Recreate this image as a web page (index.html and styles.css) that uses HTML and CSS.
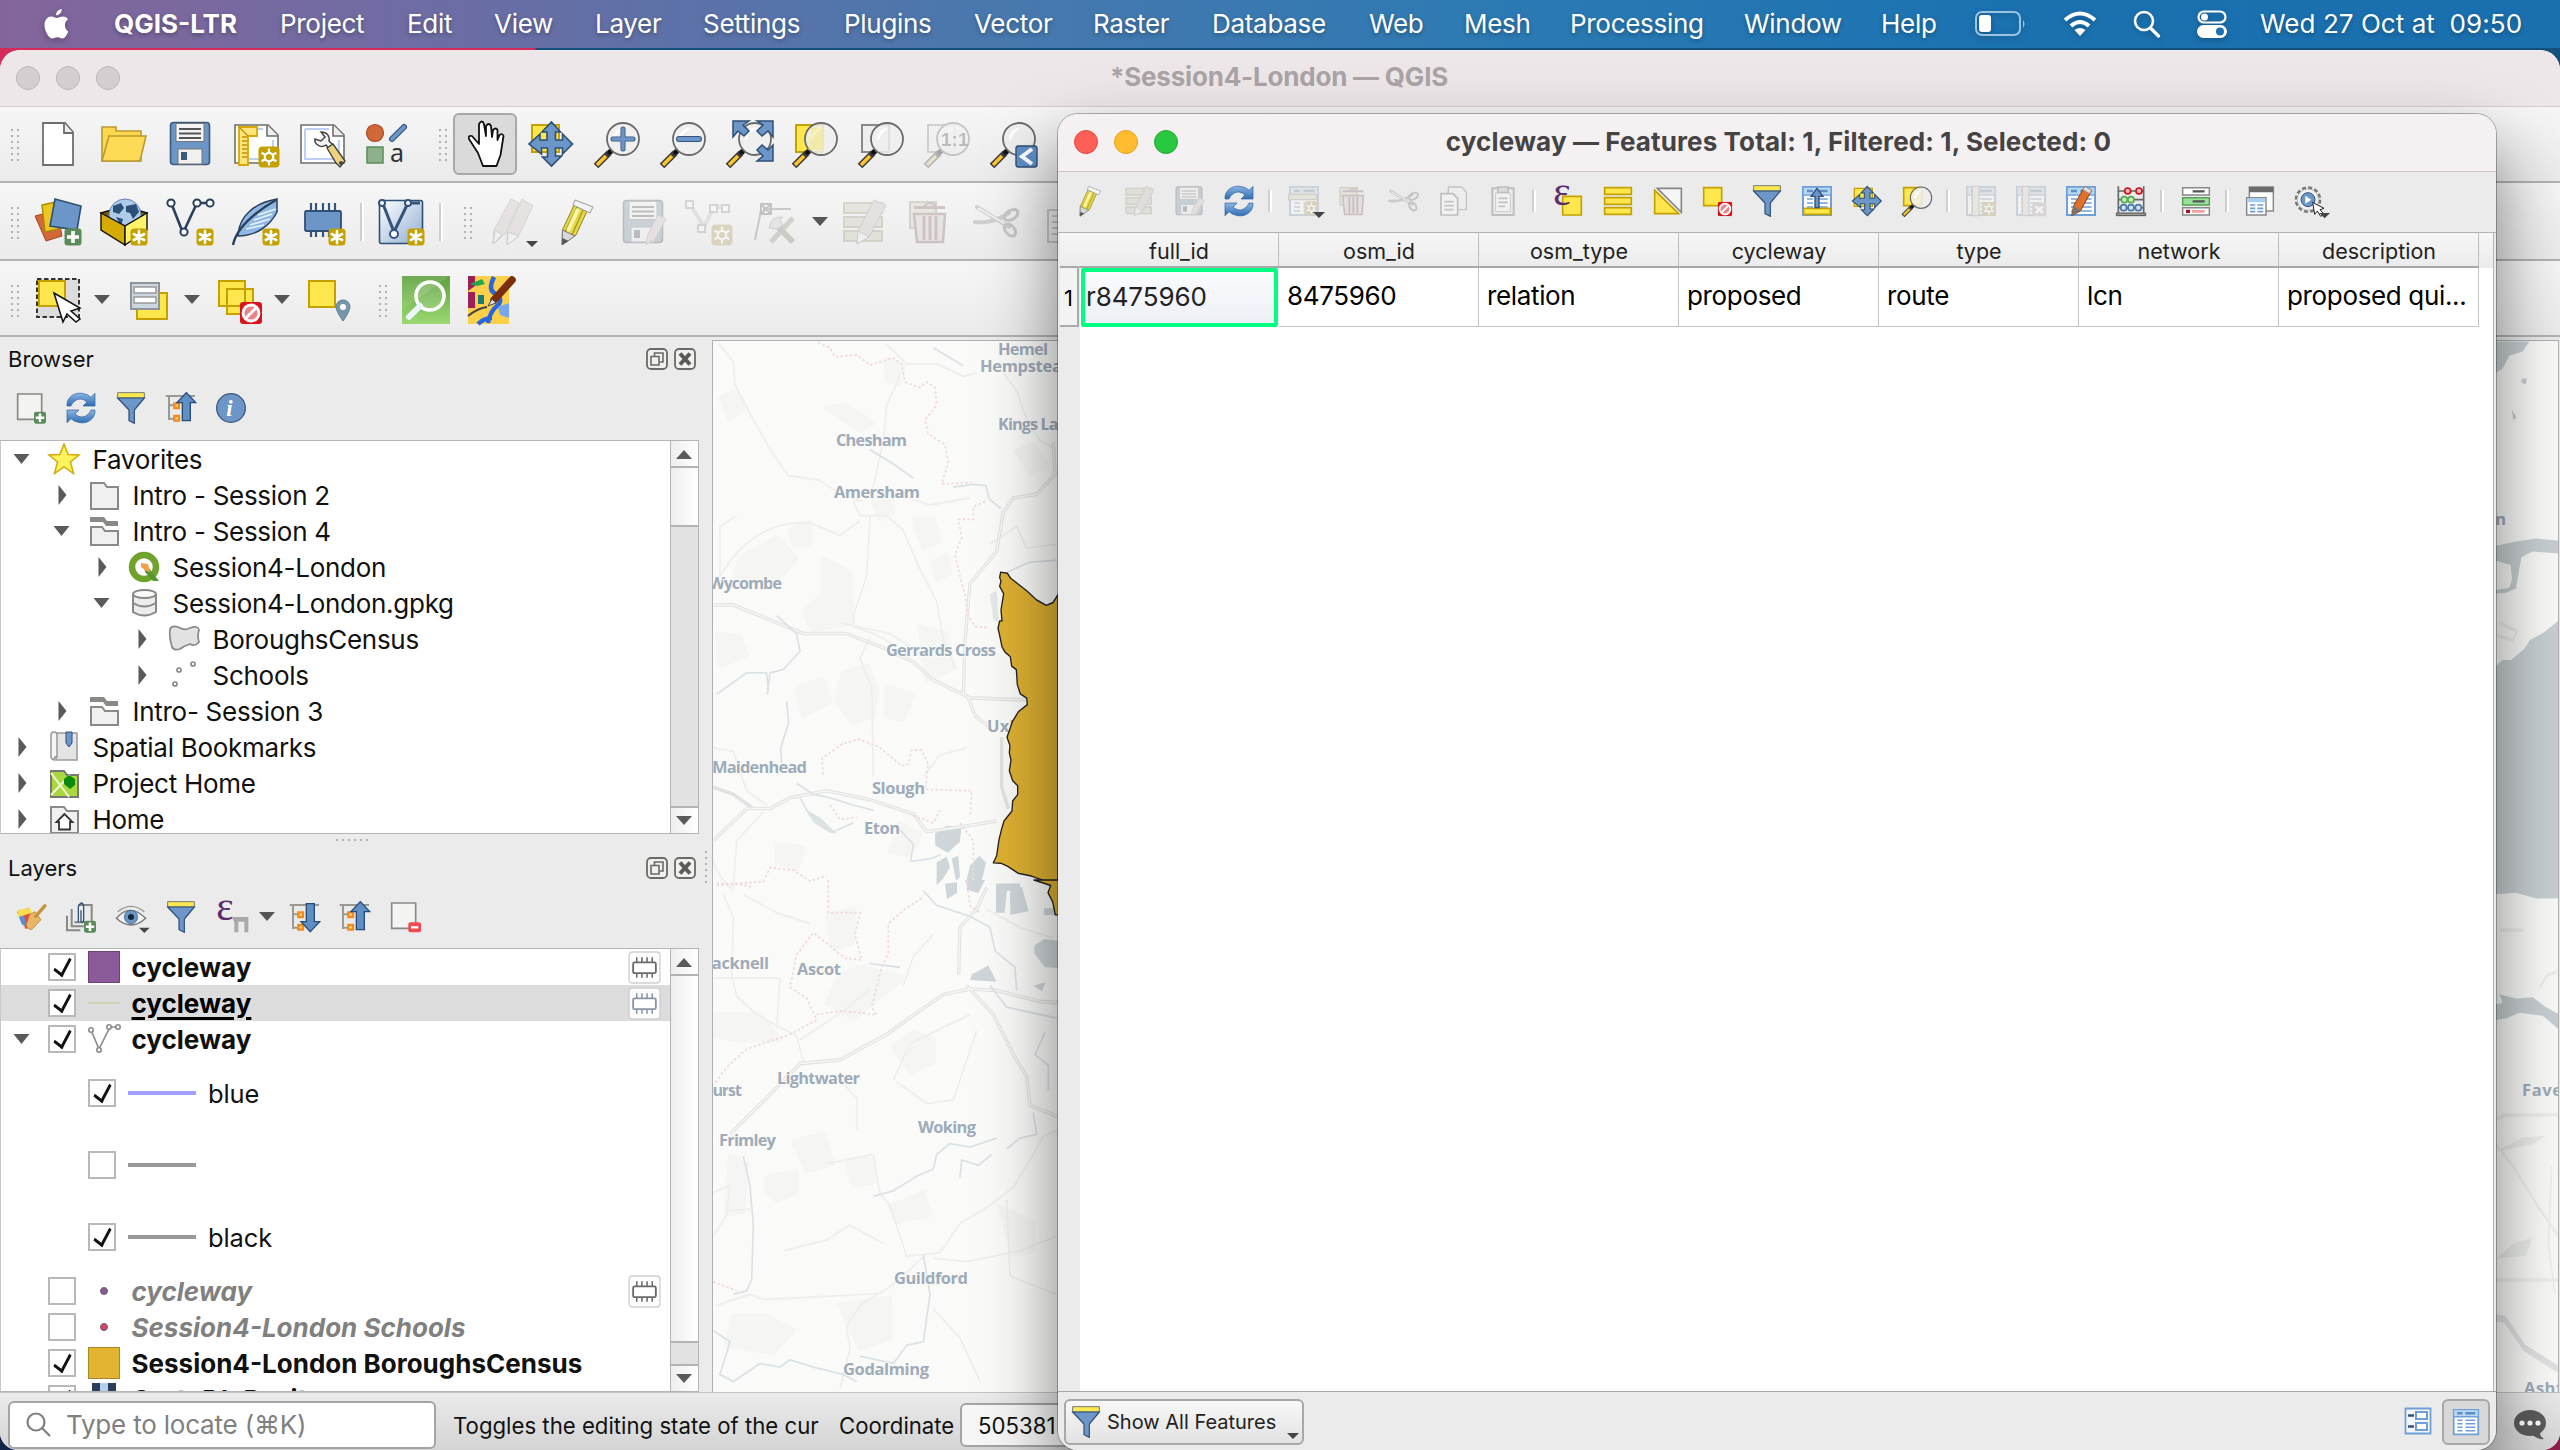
FILE: index.html
```html
<!DOCTYPE html>
<html lang="en">
<head>
<meta charset="utf-8">
<title>Session4-London — QGIS</title>
<link rel="stylesheet" href="styles.css">
</head>
<body>
<svg class="defs" width="0" height="0" aria-hidden="true">
<defs>
  <linearGradient id="g-blue" x1="0" y1="0" x2="1" y2="1"><stop offset="0" stop-color="#fff"/><stop offset="1" stop-color="#8fadd1"/></linearGradient>
  <linearGradient id="g-green" x1="0" y1="0" x2="0" y2="1"><stop offset="0" stop-color="#5ca03c"/><stop offset="1" stop-color="#9bd872"/></linearGradient>
  <linearGradient id="g-refresh" x1="0" y1="0" x2="0" y2="1"><stop offset="0" stop-color="#8cb4e0"/><stop offset="1" stop-color="#2f6eb5"/></linearGradient>
  <symbol id="star" viewBox="0 0 18 18"><rect x=".5" y=".5" width="17" height="17" rx="3.5" fill="#c5a100"/><path d="M9 3v12M3.800 6l10.400 6M14.200 6L3.800 12" stroke="#fff" stroke-width="2.600" stroke-linecap="round"/></symbol>
  <symbol id="cog" viewBox="0 0 22 22"><rect x=".5" y=".5" width="21" height="21" rx="4" fill="#c5a100"/><circle cx="11" cy="11" r="4.200" fill="none" stroke="#fff" stroke-width="2.200"/><path d="M11 2.500v5M11 14.500v5M3.600 6.700l4.300 2.500M14 12.800l4.400 2.500M18.400 6.700l-4.300 2.500M8 12.800l-4.400 2.500" stroke="#fff" stroke-width="2.200"/></symbol>
  <symbol id="plus" viewBox="0 0 18 18"><rect x=".5" y=".5" width="17" height="17" rx="3" fill="#5a8c5a"/><path d="M9 3v12M3 9h12" stroke="#fff" stroke-width="3.600"/></symbol>
  <symbol id="ban" viewBox="0 0 22 22"><rect width="22" height="22" rx="3" fill="#d9141e"/><circle cx="11" cy="11" r="8" fill="#e8848a" stroke="#fff" stroke-width="2.800"/><path d="M5.500 16.500l11-11" stroke="#fff" stroke-width="3"/></symbol>
  <symbol id="glass" viewBox="0 0 48 48"><path d="M3 46L16 33" stroke="#3a3a3a" stroke-width="6.500"/><path d="M4 45L13 36" stroke="#fcc52c" stroke-width="3.600"/><circle cx="17" cy="32" r="2.800" fill="#111"/><circle cx="30" cy="19" r="16" fill="#eee" fill-opacity=".85" stroke="#6b6b6b" stroke-width="1.800"/><path d="M20 20a11 11 0 0 1 9-12q3 0 1 1.500q-6 3-8 10z" fill="#fff"/></symbol>
  <symbol id="pencil" viewBox="0 0 48 48"><path d="M21 7L34 13 L23 37 L9 46 L9.500 32z" fill="#e6d64a" stroke="#8f8417" stroke-width="1"/><path d="M24 9L12 34M30 12L19 37" stroke="#a99a20" stroke-width="1.400"/><path d="M25 11L15 33" stroke="#fbf6a8" stroke-width="4"/><path d="M9.500 32L22 38 9 47z" fill="#d8d8d8" stroke="#777" stroke-width="1"/><path d="M9 47l.5-7 6 3z" fill="#555"/><path d="M22 2L40 9 37 15 20 7z" fill="#f4f4f4" stroke="#999"/></symbol>
  <symbol id="funnel" viewBox="0 0 48 48"><path d="M4 1h40v8H4z" fill="#fce94f" stroke="#777" stroke-width="1.500"/><path d="M4 9h40L29 27v20l-8-4V27z" fill="#6d97c8" stroke="#2f4f74" stroke-width="1.800"/></symbol>
  <symbol id="refresh" viewBox="0 0 48 48"><path d="M3 21C2 8 14 0 26 2q8 1 13 6l6-6v19H27l6-6q-8-7-16-3-6 3-8 9z" fill="url(#g-refresh)" stroke="#2b5f9e"/><path d="M45 27C46 40 34 48 22 46q-8-1-13-6l-6 6V27h18l-6 6q8 7 16 3 6-3 8-9z" fill="url(#g-refresh)" stroke="#2b5f9e"/></symbol>
  <symbol id="move" viewBox="0 0 48 48"><path d="M5 5h27v27H5z" fill="#fde74c" stroke="#c5a100" stroke-width="2"/><path d="M24.500 2l9 10h-5v8h7v-6l10 10-10 10v-6h-7v8h6L24.500 46l-9-9h5v-9h-6v6L2 24l11-10v6h7v-8h-5z" fill="#6b96c7" stroke="#2f4f74" stroke-width="1.600"/></symbol>
  <symbol id="floppy" viewBox="0 0 48 48"><rect x="4.500" y="2.500" width="39" height="42" rx="3" fill="#6b96c7" stroke="#3c5a80" stroke-width="1.600"/><rect x="10" y="3.500" width="28" height="18" fill="#f4f4f4" stroke="#777"/><path d="M13 9h22M13 13.500h22M13 18h22" stroke="#555" stroke-width="1.800"/><rect x="12" y="29" width="24" height="15" fill="#f0f0ee" stroke="#777"/><rect x="15" y="32" width="6" height="8" fill="#3c5a80"/></symbol>
  <symbol id="multiedit" viewBox="0 0 48 48"><g fill="#cfc892" stroke="#a39c5c" stroke-width="2"><path d="M3 5h38v10H3zM3 19h38v10H3zM3 33h38v10H3z"/></g><path d="M33 2l12 5-17 32-12 7 1-13z" fill="#d8bcb8" stroke="#888"/><path d="M17 33l11 6-12 7z" fill="#eee" stroke="#888"/></symbol>
  <symbol id="trash" viewBox="0 0 48 48"><path d="M3 4h26v26H3z" fill="#d8d2a0" stroke="#a39c5c" stroke-width="2"/><path d="M7 16h31l-2 28H10z" fill="#e8c8c8" stroke="#b06068" stroke-width="2.500"/><path d="M7 9.500h31M17 18v24M23 18v24M29 18v24" stroke="#b06068" stroke-width="3"/><path d="M17 8q6-6 12 0" fill="none" stroke="#b06068" stroke-width="2"/></symbol>
  <symbol id="cut" viewBox="0 0 48 48"><path d="M4 9L36 29M2 24q18 2 34-9" stroke="#8d8d8d" stroke-width="4" fill="none" stroke-linecap="round"/><path d="M5 10L34 27" stroke="#fff" stroke-width="1.500"/><ellipse cx="38" cy="17" rx="7.500" ry="4.500" transform="rotate(-30 38 17)" fill="none" stroke="#8c7070" stroke-width="3"/><ellipse cx="37" cy="32" rx="7" ry="4.500" transform="rotate(50 37 32)" fill="none" stroke="#8c7070" stroke-width="3"/></symbol>
  <symbol id="folder" viewBox="0 0 32 32"><path d="M3 4h13l3 4h11v22H3z" fill="#f0f0f0" stroke="#888a85" stroke-width="2"/></symbol>
  <symbol id="folder-open" viewBox="0 0 32 32"><path d="M2 2h14l3 4h11v5H18l-3-4H2z" fill="#888a85"/><path d="M3 12h11l3 4h13v14H3z" fill="#f0f0f0" stroke="#888a85" stroke-width="2"/></symbol>
  <symbol id="chip" viewBox="0 0 32 32"><rect x="1" y="1" width="30" height="30" rx="3" fill="#fcfcfc" stroke="#cfcfcf" stroke-width="1.300"/><path d="M8.500 6v20M13.500 6v20M18.500 6v20M23.500 6v20" stroke="currentColor" stroke-width="1.500"/><rect x="5" y="11" width="22" height="10.500" rx="1.500" fill="#fff" stroke="currentColor" stroke-width="1.800"/></symbol>
  <symbol id="tree-up" viewBox="0 0 48 48"><path d="M1 6h44M6 6v36M6 20h10M6 40h10" stroke="#9a9a92" stroke-width="3" fill="none"/><path d="M14 17h7v7h-7zM14 36h7v7h-7z" fill="#ffe08a" stroke="#f58a1c" stroke-width="3.500"/><path d="M32 1L46 16h-8v27H26V16h-8z" fill="#5f8fc4" stroke="#274b78" stroke-width="2"/></symbol>
  <symbol id="tree-down" viewBox="0 0 48 48"><path d="M1 6h44M6 6v36M6 20h10M6 40h10" stroke="#9a9a92" stroke-width="3" fill="none"/><path d="M14 17h7v7h-7zM14 36h7v7h-7z" fill="#ffe08a" stroke="#f58a1c" stroke-width="3.500"/><path d="M32 46L46 31h-8V4H26v27h-8z" fill="#5f8fc4" stroke="#274b78" stroke-width="2"/></symbol>
  <symbol id="table" viewBox="0 0 48 48"><path d="M3 3h42v42H3z" fill="#fff" stroke="#6f9fd8" stroke-width="3"/><path d="M4 4h40v10H4z" fill="#b5d8f0"/><path d="M9 9h9M23 9h17" stroke="#5f8fc4" stroke-width="4"/><path d="M3 15h42M9 21h9M23 21h17M9 27h9M23 27h17M9 33h9M23 33h17M9 39h9M23 39h17" stroke="#6f9fd8" stroke-width="2.600"/></symbol>
  <symbol id="float" viewBox="0 0 22 22"><rect x="1" y="1" width="20" height="20" rx="4" fill="#f0f0ee" stroke="#6a6a66" stroke-width="1.800"/><path d="M8.500 8V5h8.500v9h-3" fill="none" stroke="#6a6a66" stroke-width="1.600"/><path d="M5 8.500h8V17H5z" fill="none" stroke="#6a6a66" stroke-width="1.600"/></symbol>
  <symbol id="close" viewBox="0 0 22 22"><rect x="1" y="1" width="20" height="20" rx="4" fill="#f0f0ee" stroke="#6a6a66" stroke-width="1.800"/><path d="M6 5.500l10 11M16 5.500l-10 11" stroke="#5a5a57" stroke-width="4"/></symbol>
</defs>
</svg>

<header class="menubar">
  <svg class="apple" viewBox="0 0 26 32"><path d="M18.200 1c.2 3.300-2.500 6.400-5.600 6.300C12.300 4.200 15.200 1.200 18.200 1zM24.800 23.500c-1.400 3.500-3.500 7-6 7-2 0-2.700-1.200-5-1.200s-3.100 1.200-5 1.200C5.600 30.500 1 23.400 1 17.300 1 11.800 4.300 8.600 7.900 8.600c2.200 0 4 1.400 5.500 1.400 1.300 0 3.400-1.500 6-1.500 1.500 0 3.800.6 5.200 2.700-4.600 2.700-3.900 9.800.2 12.300z"/></svg>
  <nav class="menus">
    <b style="width:125px">QGIS-LTR</b><span style="width:85px">Project</span><span style="width:45px">Edit</span><span style="width:59px">View</span><span style="width:66px">Layer</span><span style="width:99px">Settings</span><span style="width:88px">Plugins</span><span style="width:77px">Vector</span><span style="width:77px">Raster</span><span style="width:115px">Database</span><span style="width:53px">Web</span><span style="width:64px">Mesh</span><span style="width:132px">Processing</span><span style="width:95px">Window</span><span style="width:55px">Help</span>
  </nav>
  <div class="status-items">
    <svg width="52" height="26" viewBox="0 0 52 26"><rect x="1" y="1" width="44" height="23" rx="6" fill="none" stroke="#9cc4e2" stroke-width="2"/><rect x="4" y="4" width="12" height="17" rx="3" fill="#fff"/><path d="M48 9q3 4 0 8z" fill="#9cc4e2"/></svg>
    <svg width="34" height="26" viewBox="0 0 34 26"><g fill="none" stroke="#fff" stroke-width="4"><path d="M2 9q15-13 30 0"/><path d="M8 15q9-8 18 0"/></g><path d="M11.500 19q5.500-4 11 0L17 25z" fill="#fff"/></svg>
    <svg width="28" height="28" viewBox="0 0 28 28"><circle cx="11" cy="11" r="9" fill="none" stroke="#fff" stroke-width="2.600"/><path d="M17.500 18l8 8" stroke="#fff" stroke-width="3.200" stroke-linecap="round"/></svg>
    <svg width="30" height="28" viewBox="0 0 30 28"><rect x="1.500" y="1.500" width="27" height="11" rx="5.500" fill="none" stroke="#fff" stroke-width="2.200"/><circle cx="7.500" cy="7" r="3.500" fill="#fff"/><rect x="0" y="15" width="30" height="13" rx="6.500" fill="#fff"/><circle cx="23" cy="21.500" r="4" fill="#1a70b0"/></svg>
    <span class="clock">Wed 27 Oct at&nbsp; 09:50</span>
  </div>
</header>

<main class="desktop">
<section class="window">
  <div class="titlebar"><div class="lights idle"><i></i><i></i><i></i></div><h1>*Session4-London — QGIS</h1></div>

  <div class="toolbar r1">
    <i class="grip"></i>
    <span class="btn"><svg viewBox="0 0 48 48"><path d="M9 3h22l8 9v33H9z" fill="#fff" stroke="#6e6e6e" stroke-width="1.800"/><path d="M30 3v10h9" fill="#eee" stroke="#6e6e6e" stroke-width="1.800"/></svg></span>
    <span class="btn"><svg viewBox="0 0 48 48"><path d="M2 7h14v4h25v30H2z" fill="#fdd84e" stroke="#b89a30" stroke-width="1.600"/><path d="M9 16h37l-6 25H2z" fill="#fddb55" stroke="#b89a30" stroke-width="1.600"/></svg></span>
    <span class="btn"><svg><use href="#floppy"/></svg></span>
    <span class="btn"><svg viewBox="0 0 48 48"><path d="M3 5h33l10 10v28H3z" fill="#fff" stroke="#6e6e6e" stroke-width="1.600"/><path d="M35 5v11h11" fill="#eee" stroke="#6e6e6e" stroke-width="1.600"/><path d="M17 9h14M41 20v19H17" stroke="#bcd0f7" stroke-width="2" fill="none"/><path d="M7 7h18v9h-9v29H7z" fill="#fde47c" stroke="#d9a800" stroke-width="1.800"/><path d="M7 7l9 9M10 17h5M10 21h5M10 25h5M10 29h5M10 33h5M10 37h5" stroke="#c09000" stroke-width="1.300"/><use href="#cog" x="26" y="26" width="22" height="22"/></svg></span>
    <span class="btn"><svg viewBox="0 0 48 48"><path d="M3 5h33l10 10v28H3z" fill="#fff" stroke="#6e6e6e" stroke-width="1.600"/><path d="M35 5v11h11" fill="#eee" stroke="#6e6e6e" stroke-width="1.600"/><path d="M7 9h24M41 20v19H7V9" stroke="#bcd0f7" stroke-width="2" fill="none"/><path d="M17 22c2 4 7 6 11 3l4 5 4-4-5-5c1-5-2-9-8-9l4 5-4 4-6-2z" fill="#f3f3f3" stroke="#444" stroke-width="1.500"/><path d="M29 28l6-4 12 17-5 6-4-4z" fill="#ecd27e" stroke="#444" stroke-width="1.400"/><circle cx="43" cy="43" r="2" fill="#444"/></svg></span>
    <span class="btn"><svg viewBox="0 0 48 48"><circle cx="11" cy="13" r="8.500" fill="#d2683a" stroke="#a8481c" stroke-width="1.200"/><path d="M28 19L40 7" stroke="#35547c" stroke-width="6" stroke-linecap="round"/><path d="M28 19L40 7" stroke="#6b96c7" stroke-width="3.800" stroke-linecap="round"/><rect x="3" y="27" width="16" height="16" fill="#8fb08d" stroke="#5a8c5a" stroke-width="1.500"/><text x="26" y="42" class="ic-a">a</text></svg></span>
    <i class="grip g2"></i>
    <span class="btn on"><svg viewBox="0 0 48 48"><path d="M17 33L8 19q-1-4 3-3l7 8L18 4q3-5 5 0l2 12 0-10q3-4 5 0l1 11 1-7q3-3 4.500 0v10l2-5q3-2 4 1l-3 19-4 11H22z" fill="#fff" stroke="#111" stroke-width="1.800" stroke-linejoin="round"/></svg></span>
    <span class="btn"><svg><use href="#move"/></svg></span>
    <span class="btn"><svg viewBox="0 0 48 48"><use href="#glass"/><path d="M30 9v20M20 19h20" stroke="#35547c" stroke-width="5" stroke-linecap="round"/><path d="M30 9v20M20 19h20" stroke="#6b96c7" stroke-width="3.400" stroke-linecap="round"/></svg></span>
    <span class="btn"><svg viewBox="0 0 48 48"><use href="#glass"/><path d="M20 19h20" stroke="#35547c" stroke-width="6" stroke-linecap="round"/><path d="M20 19h20" stroke="#6b96c7" stroke-width="4" stroke-linecap="round"/></svg></span>
    <span class="btn"><svg viewBox="0 0 48 48"><use href="#glass"/><g fill="#6b96c7" stroke="#2f4f74" stroke-width="1.500"><path d="M8 1h16l-6 4 6 6-5 5-6-5-5 6z"/><path d="M48 1H32l6 4-6 6 5 5 6-5 5 6z"/><path d="M48 41H32l6-5-6-6 5-5 6 5 5-5z"/></g></svg></span>
    <span class="btn"><svg viewBox="0 0 48 48"><path d="M5 5h27v27H5z" fill="#fde74c" stroke="#c5a100" stroke-width="2"/><use href="#glass"/><path d="M21 8h11v22H17z" fill="#f3e78a" opacity=".55"/></svg></span>
    <span class="btn"><svg viewBox="0 0 48 48"><path d="M5 5h27v27H5z" fill="#eee" stroke="#888a85" stroke-width="2"/><use href="#glass"/></svg></span>
    <span class="btn off"><svg viewBox="0 0 48 48"><path d="M5 5h27v27H5z" fill="#eee" stroke="#888a85" stroke-width="2"/><use href="#glass"/><text x="18" y="26" class="ic-11">1:1</text></svg></span>
    <span class="btn"><svg viewBox="0 0 48 48"><use href="#glass"/><rect x="27" y="26" width="21" height="21" rx="2.500" fill="#5e8fc6" stroke="#2f4f74" stroke-width="1.400"/><path d="M43 29l-10 7.500L43 44" stroke="#fff" stroke-width="4" fill="none"/></svg></span>
  </div>

  <div class="toolbar r2">
    <i class="grip"></i>
    <span class="btn"><svg viewBox="0 0 48 48"><path d="M1 18l22-6 5 26-16 5z" fill="#d2683a" stroke="#a8481c"/><path d="M8 7l18-4 7 26-22 5z" fill="#edc620" stroke="#a88a00" stroke-width="1.400"/><path d="M21 1l26 7-4 24-27-4z" fill="#6b96c7" stroke="#2f4f74" stroke-width="1.600"/><use href="#plus" x="30" y="30" width="18" height="18"/></svg></span>
    <span class="btn"><svg viewBox="0 0 48 48"><path d="M1 15L25 8l22 7-22 14z" fill="#7a6200" stroke="#111" stroke-width="1.400"/><circle cx="25" cy="17" r="16" fill="#aecbea" stroke="#5c85b5"/><path d="M13 8l8-3 3 5-5 6-6-2zM26 8l10-2 3 8-6 7-3-6-4-1zM16 19l7 2-2 7z" fill="#2d5078"/><path d="M1 15l24 13v19L1 32z" fill="#d6ab00" stroke="#111" stroke-width="1.400"/><path d="M47 15L25 28v19l22-15z" fill="#fff36a" stroke="#111" stroke-width="1.400"/><use href="#star" x="30" y="30" width="18" height="18"/></svg></span>
    <span class="btn"><svg viewBox="0 0 48 48"><g fill="#fff" stroke="#2a3f5c" stroke-width="2"><path d="M6 7l11 28L31 5h14" fill="none" stroke-width="2.600"/><circle cx="5" cy="5" r="3.600"/><circle cx="31" cy="5" r="3.600"/><circle cx="44" cy="5" r="3.600"/><circle cx="18" cy="34" r="3.600"/></g><use href="#star" x="30" y="30" width="18" height="18"/></svg></span>
    <span class="btn"><svg viewBox="0 0 48 48"><path d="M6 36C8 18 22 5 45 1v13C38 28 24 38 6 38z" fill="#8fb8e4" stroke="#2a3f5c" stroke-width="1.500"/><path d="M22 22l18-6M18 27l20-6M14 31l18-4M26 17l18-6" stroke="#eaf3fc" stroke-width="1.600"/><path d="M1 47C4 32 20 16 44 2" stroke="#2a3f5c" stroke-width="2.400" fill="none"/><use href="#star" x="30" y="30" width="18" height="18"/></svg></span>
    <span class="btn"><svg viewBox="0 0 48 48"><path d="M13 5v34M18 5v34M25 5v34M31 5v34M37 5v34" stroke="#35547c" stroke-width="2.200"/><rect x="7" y="13" width="36" height="20" rx="1.500" fill="#6b96c7" stroke="#2f4f74" stroke-width="1.800"/><use href="#star" x="30" y="30" width="18" height="18"/></svg></span>
    <i class="vsep"></i>
    <span class="btn"><svg viewBox="0 0 48 48"><rect x="2.500" y="2.500" width="43" height="43" rx="2" fill="url(#g-blue)" stroke="#2f4f74" stroke-width="1.600"/><g fill="#fff" stroke="#35547c" stroke-width="2"><path d="M6 6l11 28L31 5h12" fill="none" stroke-width="3"/><circle cx="5" cy="5" r="3"/><circle cx="31" cy="5" r="3"/><circle cx="17" cy="36" r="4"/></g><use href="#star" x="30" y="30" width="18" height="18"/></svg></span>
    <i class="vsep"></i>
    <i class="grip g3"></i>
    <span class="btn off menu"><svg viewBox="0 0 48 48"><path d="M24 1l8 4-14 31-12 10 1-14z" fill="#dcc0bb" stroke="#999"/><path d="M35 1l11 7-14 29-12 9V35z" fill="#dcc0bb" stroke="#999"/><path d="M8 32l7 5-9 9zM21 34l11 4-12 9z" fill="#f3f3f3" stroke="#888"/></svg></span>
    <span class="btn"><svg><use href="#pencil"/></svg></span>
    <span class="btn off"><svg viewBox="0 0 48 48"><use href="#floppy"/><path d="M39 17l8 4-11 20-9 6 2-11z" fill="#dcc0bb" stroke="#999"/></svg></span>
    <span class="btn off"><svg viewBox="0 0 48 48"><g fill="#fff" stroke="#999" stroke-width="2"><path d="M5 6l14 23L29 9h14" fill="none" stroke-width="4" stroke="#bbc0b8"/><path d="M1 3h7v7H1zM25 7h7v7h-7zM37 7h7v7h-7zM13 27h7v7h-7z"/></g><use href="#cog" x="26" y="26" width="22" height="22"/></svg></span>
    <span class="btn off"><svg viewBox="0 0 48 48"><path d="M10 12L4 42M12 11h28" stroke="#777" stroke-width="2"/><path d="M10 6h10v10H10zM11 7l8 8M19 7l-8 8" fill="none" stroke="#666" stroke-width="2"/><path d="M42 20L20 44" stroke="#9a9570" stroke-width="5"/><path d="M24 26l18 18" stroke="#8a8664" stroke-width="6"/><path d="M18 30q2-12 14-11l-3 3 3 5-6 4z" fill="#ccc" stroke="#888"/></svg></span>
    <i class="arrow a2"></i>
    <span class="btn off"><svg><use href="#multiedit"/></svg></span>
    <span class="btn off"><svg><use href="#trash"/></svg></span>
    <span class="btn off"><svg><use href="#cut"/></svg></span>
    <span class="btn off"><svg viewBox="0 0 48 48"><path d="M9 12h22v32H9z" fill="#eee" stroke="#777" stroke-width="2"/><path d="M13 18h14M13 24h14M13 30h14M13 36h14" stroke="#777" stroke-width="2"/></svg></span>
  </div>

  <div class="toolbar r3">
    <i class="grip"></i>
    <span class="btn"><svg viewBox="0 0 48 48"><path d="M3 3h42v38H3z" fill="#dcdcdc" stroke="#333" stroke-width="2" stroke-dasharray="4.500 2.500"/><path d="M5 5h26v25H5z" fill="#fde74c" stroke="#c5a100" stroke-width="2"/><path d="M20 17l26 15-9 3 9 8-4 3-9-8-4 8z" fill="#fff" stroke="#111" stroke-width="1.500"/></svg></span><i class="arrow"></i>
    <span class="btn"><svg viewBox="0 0 48 48"><path d="M13 17h30v26H13z" fill="#fde74c" stroke="#c5a100" stroke-width="2"/><path d="M7 7h28v26H7z" fill="#ccd6e0" stroke="#8d949b" stroke-width="2"/><path d="M10 11h22v6H10zM10 21h22v6H10z" fill="#fff" stroke="#999" stroke-width="1.500"/></svg></span><i class="arrow"></i>
    <span class="btn"><svg viewBox="0 0 48 48"><path d="M5 5h26v25H5zM13 13h26v25H13z" fill="#fde74c" stroke="#c5a100" stroke-width="2"/><use href="#ban" x="26" y="26" width="22" height="22"/></svg></span><i class="arrow"></i>
    <span class="btn"><svg viewBox="0 0 48 48"><path d="M5 5h26v26H5z" fill="#fde74c" stroke="#c5a100" stroke-width="2"/><path d="M39 45q-7-10-7-14a7 7 0 0 1 14 0q0 4-7 14z" fill="#7797a8" stroke="#5a7f94"/><circle cx="39" cy="31" r="3" fill="#fff"/></svg></span>
    <i class="grip g4"></i>
    <span class="btn"><svg viewBox="0 0 48 48"><path d="M0 0h48v48H0z" fill="url(#g-green)"/><path d="M0 0h48L0 34z" fill="#fff" opacity=".12"/><circle cx="28" cy="20" r="14" fill="#fff" fill-opacity=".15" stroke="#fff" stroke-width="3.600"/><path d="M18 30L7 41" stroke="#eef4fb" stroke-width="6" stroke-linecap="round"/></svg></span>
    <span class="btn"><svg viewBox="0 0 48 48"><path d="M0 0h41v48H0z" fill="#fcd04b"/><path d="M0 0h7v10l-7 5zM0 16h7v16H0z" fill="#9c2058"/><path d="M2 8l12-5 3 5-8 2z" fill="#22a848"/><path d="M26 1q-6 12 0 16 10 6 4 12-8 6-10 18M10 48q6-6 14-6" stroke="#2866e0" stroke-width="4.500" fill="none"/><path d="M10 19h6v9h-6z" fill="#1c7a72"/><path d="M30 31l11-4v15l-9-3z" fill="#7aa6f0"/><path d="M0 40q10-8 19-9" stroke="#444" stroke-width="2" fill="none"/><path d="M26 24L44 4" stroke="#7a2e0c" stroke-width="7.500" stroke-linecap="round"/><path d="M20 30l4-7 4 4z" fill="#ddd" stroke="#444"/></svg></span>
  </div>

  <div class="workspace">
    <aside class="dock">
      <div class="dock-title">Browser<span><svg><use href="#float"/></svg><svg><use href="#close"/></svg></span></div>
      <div class="dock-tools">
        <svg viewBox="0 0 48 48"><path d="M4 3h36v38H4z" fill="#f3f3f1" stroke="#888a85" stroke-width="2.500"/><use href="#plus" x="28" y="29" width="19" height="19"/></svg>
        <svg><use href="#refresh"/></svg>
        <svg><use href="#funnel"/></svg>
        <svg><use href="#tree-up"/></svg>
        <svg viewBox="0 0 48 48"><circle cx="24" cy="24" r="21.500" fill="#6b96c7" stroke="#3c5a80" stroke-width="2"/><text x="17" y="36" class="ic-i">i</text></svg>
      </div>
      <div class="pane browser">
        <ul class="tree">
          <li><i class="tw open"></i><svg><path d="M16 1l4.200 10.500L31 12l-8.500 7 3 11.500L16 24l-9.500 6.500 3-11.500L1 12l10.800-.5z" fill="#fdf35c" stroke="#d4a90a" stroke-width="1.500"/></svg>Favorites</li>
          <li class="l1"><i class="tw"></i><svg><use href="#folder"/></svg>Intro - Session 2</li>
          <li class="l1"><i class="tw open"></i><svg><use href="#folder-open"/></svg>Intro - Session 4</li>
          <li class="l2"><i class="tw"></i><svg><circle cx="16" cy="16" r="12" fill="none" stroke="#6fa32b" stroke-width="6.500"/><path d="M16 15l4 1 11 14h-6l-8-9z" fill="#589632"/><path d="M13 12l7 1 2 8-4-1-5-4z" fill="#f5a04a"/></svg>Session4-London</li>
          <li class="l2"><i class="tw open"></i><svg><path d="M5 7v18q11 7 23 0V7" fill="#ececec" stroke="#888a85" stroke-width="2"/><ellipse cx="16.500" cy="7" rx="11.500" ry="4" fill="#fafafa" stroke="#888a85" stroke-width="2"/><path d="M5 16q11 7 23 0" fill="none" stroke="#888a85" stroke-width="2"/></svg>Session4-London.gpkg</li>
          <li class="l3"><i class="tw"></i><svg><path d="M2 6q2-4 8-2 6 4 12 1 8-3 9 2-2 6 0 12-4 5-9 2-6 2-10 5-6 2-8-2-3-10-2-18z" fill="#e2e2e2" stroke="#888a85" stroke-width="1.700"/></svg>BoroughsCensus</li>
          <li class="l3"><i class="tw"></i><svg><g fill="#fff" stroke="#888a85" stroke-width="1.700"><circle cx="25" cy="5" r="2"/><circle cx="11" cy="11" r="2"/><circle cx="7" cy="25" r="2"/></g></svg>Schools</li>
          <li class="l1"><i class="tw"></i><svg><use href="#folder-open"/></svg>Intro- Session 3</li>
          <li><i class="tw"></i><svg><path d="M8 2h21v27H8z" fill="#e4e4e6" stroke="#999" stroke-width="1.500"/><path d="M3 4q0-3 3-3t3 3v22q-3-1-3 3-3-1-3-3z" fill="#f6f6f6" stroke="#999" stroke-width="1.500"/><path d="M18 1h6v11l-3 4-3-4z" fill="#6b96c7" stroke="#2f4f74"/></svg>Spatial Bookmarks</li>
          <li><i class="tw"></i><svg><path d="M3 4h13l3 4h11v22H3z" fill="#a9d93e" stroke="#777" stroke-width="2"/><path d="M3 6l18 24M3 28L22 8" stroke="#f3f8d8" stroke-width="2"/><path d="M21 8l6 4v6l-5 4-6-5v-5z" fill="#0c8a0c"/></svg>Project Home</li>
          <li><i class="tw"></i><svg><path d="M3 4h13l3 4h11v22H3z" fill="#f0f0f0" stroke="#888a85" stroke-width="2"/><path d="M16.500 11l-8 8h2.500v7.500h11V19h2.500z" fill="#fff" stroke="#333" stroke-width="1.800"/></svg>Home</li>
        </ul>
        <div class="scroll"><i class="up"></i><i class="thumb"></i><i class="track"></i><i class="down"></i></div>
      </div>
      <div class="hsplit"><i></i></div>
      <div class="dock-title second">Layers<span><svg><use href="#float"/></svg><svg><use href="#close"/></svg></span></div>
      <div class="dock-tools second">
        <svg viewBox="0 0 48 48"><path d="M3 16l18-6 7 28-12 4z" fill="#e8483a"/><path d="M3 16l9-3 5 26-7-4z" fill="#5f8fd0"/><path d="M3 14l20-4 2 8-20 6z" fill="#f6dd52"/><path d="M22 20l8-4 9 12-14 15q-8-1-8-8z" fill="#e8b765" stroke="#a87728"/><path d="M31 23L45 7" stroke="#c8913c" stroke-width="5" stroke-linecap="round"/></svg>
        <svg viewBox="0 0 48 48"><path d="M20 6h20v26H14M10 12v26h20M3 22v22h20" fill="none" stroke="#888a85" stroke-width="3"/><path d="M20 32V8q6-10 8 0v22q-4 4-4 0V14" fill="none" stroke="#35547c" stroke-width="2"/><use href="#plus" x="28" y="29" width="19" height="19"/></svg>
        <svg viewBox="0 0 48 48"><path d="M2 26q20-24 44 0-22 20-44 0z" fill="#f3f3f3" stroke="#777" stroke-width="2"/><path d="M4 16q20-16 40 0" fill="none" stroke="#999" stroke-width="2"/><circle cx="24" cy="24" r="10" fill="#6b96c7" stroke="#35547c"/><circle cx="24" cy="24" r="4.500" fill="#16263c"/><path d="M36 40h16l-8 8z" fill="#444"/></svg>
        <svg><use href="#funnel"/></svg>
        <svg viewBox="0 0 48 48"><text x="2" y="29" class="ic-e big">ε</text><path d="M25 24h25v23h-6V31h-9v16h-6V32z" fill="#a9a9a7"/></svg>
        <i class="arrow a3"></i>
        <svg><use href="#tree-down"/></svg>
        <svg><use href="#tree-up"/></svg>
        <svg viewBox="0 0 48 48"><path d="M4 3h36v38H4z" fill="#f3f3f1" stroke="#888a85" stroke-width="2.500"/><rect x="29" y="32" width="19" height="15" rx="3" fill="#f04a4e"/><path d="M33 39.500h11" stroke="#fff" stroke-width="3.500"/></svg>
      </div>
      <div class="pane layers">
        <ul class="tree bold">
          <li><i class="tw none"></i><i class="cb ck"></i><i class="sw" style="background:#8b5a9a;border-color:#6b4378"></i>cycleway<svg class="mem"><use href="#chip"/></svg></li>
          <li class="sel"><i class="tw none"></i><i class="cb ck"></i><i class="sw line"></i><u>cycleway</u><svg class="mem dim"><use href="#chip"/></svg></li>
          <li><i class="tw open"></i><i class="cb ck"></i><svg class="sym"><g fill="#fff" stroke="#888a85" stroke-width="1.600"><path d="M3 7l8 19L22 4h8" fill="none"/><circle cx="3" cy="7" r="2.200"/><circle cx="11" cy="27" r="2.200"/><circle cx="21" cy="4" r="2.200"/><circle cx="30" cy="4" r="2.200"/></g></svg>cycleway</li>
          <li class="cls"><i class="cb ck"></i><i class="ln" style="background:#a0a0ff"></i>blue</li>
          <li class="cls"><i class="cb"></i><i class="ln"></i></li>
          <li class="cls"><i class="cb ck"></i><i class="ln"></i>black</li>
          <li class="hid"><i class="tw none"></i><i class="cb"></i><i class="dot" style="background:#8b5a9a"></i>cycleway<svg class="mem"><use href="#chip"/></svg></li>
          <li class="hid"><i class="tw none"></i><i class="cb"></i><i class="dot" style="background:#d8406a"></i>Session4-London Schools</li>
          <li><i class="tw none"></i><i class="cb ck"></i><i class="sw" style="background:#e3b332;border-color:#a8862a"></i>Session4-London BoroughsCensus</li>
          <li><i class="tw none"></i><i class="cb ck"></i><svg class="sym"><path d="M4 0h24v26H4z" fill="#2b3d5a"/><path d="M12 0h8v10h-8z" fill="#b5cfee"/></svg>CartoDb Positron</li>
        </ul>
        <div class="scroll"><i class="up"></i><i class="thumb long"></i><i class="track"></i><i class="down"></i></div>
      </div>
    </aside>
    <div class="vsplit"><i></i></div>
    <div class="map">
      <svg viewBox="713 341 1845 1051">
        <path d="M713 341h1845v1051H713z" fill="#fafaf8"/>
        <g transform="translate(700 330) scale(.33333 .35714)">
          <g class="wood"><path d="M370 640l80 40 10 140-120 20-30-50 60-50zM270 560l60-20 0 60-50 0zM430 960l70-20 30 60-10 80-60 20-50-60zM640 530l60 0 20 60-50 20zM520 480l50-30 10 60-40 20zM120 640l110-60 60 60-60 60-130 10zM660 830l80 20 20 100-80 30zM290 1000l80-20 20 60-80 40zM560 1000l80 20-30 70-50-10zM50 850l70 10 20 50-80 30zM380 220l60-10 80 50-40 20zM560 80l50 20-10 50-40-10zM60 190l50-20 20 50-40 30zM600 1380l60 30-30 60-60-10zM950 340l50-20 40 60-50 20zM700 650l40-20 10 50-40 20zM230 1440l80 10-20 60-60-20z"/></g>
          <g fill="#cfd6d9"><path d="M705 1410l35-22 44 4-4 40-36 32-38-20zM800 1540l10-40 28-28 20 20-10 40-18 36h-30zM890 1550h70v20h-70zM710 1490l30-15 10 30-20 30-20 20zM755 1480l20-8 5 60-12 10z"/><path d="M320 1345l40 20 50 45-20-2-50-30z" opacity=".7"/><path d="M870 740l20-10 6 90-16-10z" opacity=".5"/></g>
          <g class="road"><path d="M55 38l45 50 5 65 50 90 55 90 55 75 90 12 70 40 60 20M460 480l20 40h80l50 40 50 110 50 90 20 110 40 80M510 520l-10 170-40 110 0 30 60 20 60 30M560 40l60 55 90 0 80 35 40-10M910 120l40 50 30 80 40 60 40 20M40 1170l60 10 40 110 60 40M60 690q100-160 270-150l90 35 60-40M110 520l-50 30 0 140M510 860l-30 60 35 80 5 250M590 460l100 30 120-20M600 130l-40 80-10 100-30 130M800 1170l-80 20-50 60M870 600l80-50 30 60 90-10M40 1440q-20 60 60 130M190 1350l-80 80-10 130M420 820l150 30 100 60"/></g>
          <g class="road big"><path d="M40 770h60l120 45 90 35h130l110 40 90 40 60 50 110 50 130 5h100M790 1020l5-150 15-160 80-90 20-110 30-40 70-10 55-55-5-90M805 1030l20 50 40 30M40 1430l100-90 70 0 60-30 110-20 130 25 130 40 40 50 110-15 100-15"/><path d="M40 1280l60 20 60 40M905 1140l0 140 20 60"/></g>
          <g class="road core"><path d="M40 770h60l120 45 90 35h130l110 40 90 40 60 50 110 50 130 5h100M790 1020l5-150 15-160 80-90 20-110 30-40 70-10 55-55-5-90M805 1030l20 50 40 30M40 1430l100-90 70 0 60-30 110-20 130 25 130 40 40 50 110-15 100-15"/></g>
          <g class="water"><path d="M510 335l70 40 60 40M700 50l90 50M760 440l60-8 38 4 10 38 35 26M230 800l60 50 10 50-50 50-40 10-8 60M205 1010l-5-50-60 0-90 60M260 1040l6 60-24 70 4 50M290 1270l50 30 50 10 70 20 60 15M300 1310l30 50 70 45 60-25M600 1400l40 40-8 48 60-8 30 -10M900 690l40-20 50-20 80-5"/></g>
          <g class="bound"><path d="M355 35l35 15 15 25 65-5 40 28 70-20 25 18 10 50 45 15 20-15 25 15 5 50-35 40 10 40 50 30 10 50-20 60 90-4M855 480l-35 15 0 35-45 0 10 50-20 50 15 60 15 50 10 60 20 30 40 4M370 1245l-5-45 60-40 50-14 60 20 70 54 20-4 10-40 30 0 20 40-10 70 140 4-4 70M50 1550l60 0 80-5 20-40 70 8 50 30 50-15M390 1330l30 40 50-5M640 1360l60 20 20-35M780 1380l40 50 0 130"/></g>
        </g>
        <g transform="translate(700 880) scale(.33333 .36350)">
          <g class="wood"><path d="M40 370l140 0 60 70-110 0-90-10zM380 100l80-20 0 90-60 20zM420 260l70-20 120 30-150 110-80-40zM580 460l60-40 60 20 0 60-70 30zM200 820l90-20 0 60-60 20-30-20zM440 770h80v60l-60 10zM570 900l100-40 20 60-100 20zM100 1200l100 0 80 40-60 60-140-20zM420 1170l150-20 0 110-90 30zM90 760l50 20-10 130-50 10zM280 720l90-20 30 80-80 20zM900 900l100 40 0 80-60 10z"/></g>
          <g fill="#cfd6d9"><path d="M888 12l34 4-8 74h-26zM930 14l36 6 20 66-55 10zM735 10l36-4 0 30-30 16zM795 0h60l-20 36-24-6zM1003 180l30-18 42 5v75l-40-2-32-38zM1032 78h40v18h-40zM815 260l50-25 25 45-80-5zM1000 290l36-8-10 24z"/></g>
          <g class="road"><path d="M70 40l30 60-5 160 15 60 60 50 120 60 20 70M130 40l100 50 100 30M300 440l130-80 80-60M40 270h200l-10 140M580 550l50-100 180-80M590 555l90 60 80-10 70-190M40 860l50-20-10 80-40 60M80 910l70-5M380 780l140-25 20 110 30 30 50 140 100-10 60-80 90-50 70-50 60-90 30-50 50-20M50 1170l100-30 40 14 350-16 60-40 80-70M420 1400l30-110-10-60 40-60 70-40M920 880l10 210 140 50M550 1000l-100-50-70 40-130 30M700 1040l100 10 160-30 110-40M410 540l60 60 0 90M700 150l-60 60-30 80M860 80l100 50 100 30M700 1180l80 80 60 120"/></g>
          <g class="road big"><path d="M860 20l-30 60-50 50-4 130M90 700l120-110 90-85 120-10 140-70 90-60 80-50 80-15 80 4 130 30 100 6M800 290l80 80 60 110 40 60 10 80 80 30"/></g>
          <g class="road core"><path d="M860 20l-30 60-50 50-4 130M90 700l120-110 90-85 120-10 140-70 90-60 80-50 80-15 80 4 130 30 100 6M800 290l80 80 60 110 40 60 10 80 80 30"/></g>
          <g class="water"><path d="M670 30l40 40 100 30 60 30 15 65 60 45 5 65M870 290l50 60 100 20 50 10M510 230l90 10M1035 420l-30 60 40 30 0 70M520 870l60-15 70-40 50-20 10-40 40-30 60 10 80-25M780 820l5-50 50 15 40-30M1000 640l10 60-50 10-40 30M130 760l20 80 10 110-5 150-15 30-40 10M40 1240l50 30-30 90 40 20 80-50 60 10 30-20 70 20 90 20 40 20M480 1310l100 20 40-50 50-10 20-130-20-110"/></g>
          <g class="bound"><path d="M50 15l60-5 50 10M385 0l0 90 95 0-15 60 20 70-50-5-95-70-50 60-20 90 50 30 30 60-80 40-130 40-60 50-40 50M350 370l70-10 110 10-15-20 30-110 20-40 0-80 50-40 50-30M40 1105l70 25M800 0l10 70 30 20"/></g>
        </g>
        <g transform="translate(2480 330) scale(.33333 .71429)">
          <path fill="#c8cfd2" d="M48 16h100l-20 14-40 6-20 18-20 6zM48 302l60-6 60-4 70 3v18l-80-3-34 8-8 22-8 22-30 6-30 1v-5l40-3 8-12-4-20-44-6zM48 470l20-8 26 0 40-16 16-12 40-10 48-18v390l-70 0-60-8-60 2zM48 944l20-2-10-12 50 6 50-2 40 14 40 10v22l-50-20-70-4-40 8-30 2zM95 112l15 10-10 4zM125 68l16 0-4 8-12-2z"/>
          <path fill="#eceeeb" d="M48 1300l50-20 60-10-20 26zM48 1150l80-20 70-2-40 12z"/>
          <g class="road"><path d="M48 1105l30-6 160 0M48 1140l50 30 80 60 60 40M60 410l50 12-10 12-50-6M180 920l20-16 30-6M60 840l70 0M215 1170l-10 110 20 70M48 1330h190"/></g>
          <g class="road big"><path d="M48 1383l26 2 60 40 100 30"/></g>
        </g>
        <g class="labels">
          <text x="998" y="355" textLength="50">Hemel</text><text x="980" y="372" textLength="92">Hempstead</text><text x="998" y="430" textLength="100">Kings Langley</text><text x="836" y="446" textLength="71">Chesham</text><text x="834" y="498" textLength="86">Amersham</text><text x="709" y="589" textLength="73">Wycombe</text><text x="886" y="656" textLength="110">Gerrards Cross</text><text x="987" y="732" textLength="76">Uxbridge</text><text x="712" y="773" textLength="95">Maidenhead</text><text x="872" y="794" textLength="53">Slough</text><text x="864" y="834" textLength="36">Eton</text><text x="694" y="969" textLength="75">Bracknell</text><text x="797" y="975" textLength="44">Ascot</text><text x="777" y="1084" textLength="83">Lightwater</text><text x="668" y="1096" textLength="74">Sandhurst</text><text x="719" y="1146" textLength="57">Frimley</text><text x="918" y="1133" textLength="58">Woking</text><text x="894" y="1284" textLength="74">Guildford</text><text x="843" y="1375" textLength="86">Godalming</text><text x="2436" y="525" textLength="70">Basildon</text><text x="2522" y="1096" textLength="96">Faversham</text><text x="2524" y="1394" textLength="68">Ashford</text>
        </g>
        <path class="city" transform="translate(700 330) scale(.33333 .35714)" d="M902 678l20 3 10 14 48 35 30 26 29 15 20-8 15-22 0 820-20-12-60-20-40-8-32-20-20-8-22-1 10-20 7-45 8-30 7-22 24-28 2-28 15-18 0-25-15-14-10-28 5-30-5-20 2-20-9-24 17-45 17-26 27-20-2-18-19-12-9-26-3-42-14-10-4-26-16-13-9-15-7-32-5-20 5-20 7-1-3-30 8-46-12-20 4-15-4-10z"/>
        <path class="city" transform="translate(700 880) scale(.33333 .36350)" d="M1002 0l50 15-8 20 14 25 8 36 12 0 0-96z"/>
      </svg>
    </div>
  </div>

  <footer class="statusbar">
    <div class="locator"><svg viewBox="0 0 28 28"><circle cx="11" cy="11" r="8.500"/><path d="M17.500 17.500l7.500 7.500"/></svg><span>Type to locate (⌘K)</span></div>
    <span class="msg">Toggles the editing state of the cur</span>
    <span class="coord">Coordinate</span>
    <div class="coordbox"><span>505381</span></div>
    <svg class="bubble" viewBox="0 0 34 32"><ellipse cx="17" cy="14" rx="16" ry="13" fill="#5c5c5c"/><path d="M18 25q7 6 13 5-5-3-4-8z" fill="#5c5c5c"/><g fill="#fff"><circle cx="9" cy="14" r="2.600"/><circle cx="17" cy="14" r="2.600"/><circle cx="25" cy="14" r="2.600"/></g></svg>
  </footer>
</section>

<section class="dialog">
  <div class="dlg-title"><div class="lights"><i></i><i></i><i></i></div><h2>cycleway — Features Total: 1, Filtered: 1, Selected: 0</h2></div>
  <div class="dlg-tools">
    <span><svg><use href="#pencil"/></svg></span>
    <span class="off"><svg><use href="#multiedit"/></svg></span>
    <span class="off"><svg viewBox="0 0 48 48"><use href="#floppy"/><path d="M39 19l8 4-11 18-9 6 2-11z" fill="#dcc0bb" stroke="#999"/></svg></span>
    <span><svg><use href="#refresh"/></svg></span>
    <i class="vsep"></i>
    <span class="off menu"><svg viewBox="0 0 48 48"><use href="#table"/><path d="M1 14h42v8H1z" fill="#d8d2a0" stroke="#a39c5c" stroke-width="2"/><use href="#cog" x="24" y="24" width="22" height="22"/></svg></span>
    <span class="off"><svg><use href="#trash"/></svg></span>
    <span class="off"><svg><use href="#cut"/></svg></span>
    <span class="off"><svg viewBox="0 0 48 48"><path d="M17 3h20l7 8v26H17z" fill="#f3f3f3" stroke="#777" stroke-width="2"/><path d="M6 13h18l7 7v25H6z" fill="#fff" stroke="#666" stroke-width="2.500"/><path d="M11 25h14M11 31h14M11 37h14" stroke="#777" stroke-width="2.500"/></svg></span>
    <span class="off"><svg viewBox="0 0 48 48"><path d="M8 5h32v40H8z" fill="#eee" stroke="#666" stroke-width="3"/><path d="M13 12h22v28H13z" fill="#fff" stroke="#888" stroke-width="1.500"/><path d="M16 3h16v8H16z" fill="#bbb" stroke="#666" stroke-width="2"/><path d="M17 20h14M17 26h14M17 32h10" stroke="#777" stroke-width="2.500"/></svg></span>
    <i class="vsep"></i>
    <span><svg viewBox="0 0 48 48"><path d="M16 17h28v28H16z" fill="#fde74c" stroke="#c5a100" stroke-width="2.500"/><text x="2" y="30" class="ic-e big">ε</text></svg></span>
    <span><svg viewBox="0 0 48 48"><path d="M4 4h40v10H4zM4 19h40v10H4zM4 34h40v10H4z" fill="#fde74c" stroke="#c5a100" stroke-width="2.500"/></svg></span>
    <span><svg viewBox="0 0 48 48"><path d="M8 5h36v36z" fill="#f6f6f6" stroke="#888" stroke-width="2.500"/><path d="M4 8v35h36z" fill="#fde74c" stroke="#c5a100" stroke-width="2.500"/></svg></span>
    <span><svg viewBox="0 0 48 48"><path d="M4 4h27v27H4z" fill="#fde74c" stroke="#c5a100" stroke-width="2.500"/><use href="#ban" x="25" y="25" width="22" height="22"/></svg></span>
    <span><svg><use href="#funnel"/></svg></span>
    <span><svg viewBox="0 0 48 48"><use href="#table"/><path d="M4 35h40v9H4z" fill="#fde74c" stroke="#c5a100" stroke-width="2.500"/><path d="M24 5l9 12h-6v17h-6V17h-6z" fill="#6b96c7" stroke="#2f4f74" stroke-width="2"/></svg></span>
    <span><svg><use href="#move"/></svg></span>
    <span><svg viewBox="0 0 48 48"><path d="M4 4h27v27H4z" fill="#fde74c" stroke="#c5a100" stroke-width="2.500"/><use href="#glass"/></svg></span>
    <i class="vsep"></i>
    <span class="off"><svg viewBox="0 0 48 48"><use href="#table"/><path d="M11 2h10v44H11z" fill="#e0ddc0" stroke="#999" stroke-width="2"/><use href="#cog" x="25" y="25" width="22" height="22"/></svg></span>
    <span class="off"><svg viewBox="0 0 48 48"><use href="#table"/><path d="M11 2h10v44H11z" fill="#e8d4d4" stroke="#999" stroke-width="2"/><rect x="26" y="27" width="21" height="20" rx="3" fill="#c8a0a0"/><path d="M31 32l11 10M42 32L31 42" stroke="#fff" stroke-width="4"/></svg></span>
    <span><svg viewBox="0 0 48 48"><use href="#table"/><path d="M30 2l10 6-17 31-13 7 3-15z" fill="#e0702c" stroke="#8a3c0c" stroke-width="1.500"/><path d="M13 31l10 7-13 8z" fill="#777"/><path d="M30 2l10 6-3 5-10-6z" fill="#ddd" stroke="#888"/></svg></span>
    <span><svg viewBox="0 0 48 48"><path d="M5 2v42M43 2v42M5 9h38M5 22h38M5 34h38" stroke="#666" stroke-width="2.500"/><path d="M2 42h44v4H2z" fill="#9a9a92" stroke="#555" stroke-width="1.500"/><g stroke-width="2.500"><g fill="#f6b4b4" stroke="#c8141e"><circle cx="19" cy="9" r="4.500"/><circle cx="36" cy="9" r="4.500"/></g><g fill="#c4f0b8" stroke="#58a858"><circle cx="14" cy="22" r="4.500"/><circle cx="24" cy="22" r="4.500"/></g><g fill="#cfe2f6" stroke="#4a78a8"><circle cx="13" cy="34" r="4.500"/><circle cx="24" cy="34" r="4.500"/><circle cx="35" cy="34" r="4.500"/></g></g></svg></span>
    <i class="vsep"></i>
    <span><svg viewBox="0 0 48 48"><g stroke="#888" stroke-width="2.200" fill="#fff"><path d="M4 4h40v11H4z"/><path d="M4 19h40v11H4z" fill="#9be09b" stroke="#58a058"/><path d="M4 34h40v11H4z"/></g><path d="M19 9.500h18M19 24.500h18" stroke="#555" stroke-width="3.500"/><path d="M9 39.500h6" stroke="#b0101c" stroke-width="5"/><path d="M18 39.500h19" stroke="#f6a0a4" stroke-width="4"/></svg></span>
    <i class="vsep"></i>
    <span><svg viewBox="0 0 48 48"><path d="M8 3h36v36H8z" fill="#fff" stroke="#888" stroke-width="2.200"/><path d="M8 3h36v8H8z" fill="#6b6b6b"/><path d="M4 19h29v26H4z" fill="#fff" stroke="#888" stroke-width="2.200"/><path d="M5 20h27v6H5z" fill="#a9cff0"/><path d="M9 30h8M20 30h9M9 35h8M20 35h9M9 40h8M20 40h9" stroke="#6f9fd8" stroke-width="2.500"/></svg></span>
    <span><svg viewBox="0 0 48 48"><circle cx="21" cy="22" r="18" fill="#f0f0f0" stroke="#777" stroke-width="4" stroke-dasharray="6 3.400"/><circle cx="21" cy="22" r="16" fill="#f3f3f3" stroke="#999"/><circle cx="21" cy="22" r="10.500" fill="#6b96c7" stroke="#35547c" stroke-width="1.500"/><path d="M17 16l9 6-9 6z" fill="#fff"/><path d="M28 26l17 9-6 2 6 7-5 3-5-8-4 5z" fill="#fff" stroke="#222" stroke-width="1.500"/><path d="M38 42h16l-8 8z" fill="#444"/></svg></span>
  </div>
  <div class="table">
    <div class="thead"><span></span><span>full_id</span><span>osm_id</span><span>osm_type</span><span>cycleway</span><span>type</span><span>network</span><span>description</span></div>
    <div class="trow"><span class="rn">1</span><span class="cur">r8475960</span><span>8475960</span><span>relation</span><span>proposed</span><span>route</span><span>lcn</span><span>proposed qui...</span></div>
  </div>
  <div class="dlg-foot">
    <div class="filter"><svg><use href="#funnel"/></svg>Show All Features</div>
    <div class="views">
      <svg viewBox="0 0 28 28"><path d="M1.500 1.500h25v25h-25z" fill="#f4f6f8" stroke="#6f9fd8" stroke-width="1.800"/><path d="M4 8.500h6M4 19.500h6" stroke="#35547c" stroke-width="2.600"/><path d="M12 5h11v7H12zM12 16h11v7H12z" fill="#fff" stroke="#6f9fd8" stroke-width="2"/></svg>
      <span class="pressed"><svg><use href="#table"/></svg></span>
    </div>
  </div>
</section>
</main>
</body>
</html>
```
FILE: styles.css
```css
* { box-sizing: border-box; }
html, body { margin: 0; width: 2560px; height: 1450px; overflow: hidden; }
body {
  font-family: Inter, "Liberation Sans", sans-serif;
  font-size: 26px;
  color: #111;
  display: flex;
  flex-direction: column;
}
svg { display: block; overflow: visible; flex: none; }
.defs { width: 0; height: 0; overflow: hidden; }
ul { list-style: none; margin: 0; padding: 0; }
h1, h2 { margin: 0; font-size: 26px; font-weight: 700; white-space: nowrap; }
i { font-style: normal; flex: none; }

/* menu bar */
.menubar {
  height: 48px; flex: none;
  display: flex; align-items: center;
  padding: 0 38px 1px 43px;
  color: #fff;
  background: linear-gradient(90deg, #83659b 0, #6f6ca3 400px, #4878ae 1000px, #2c7ab3 1500px, #1b72b1 2000px, #1a6fae);
}
.menubar svg { filter: drop-shadow(0 2px 3px rgba(0,0,0,.25)); }
.apple { width: 27px; height: 32px; fill: #fff; margin-right: 44px; }
.menus { display: flex; gap: 42px; text-shadow: 0 2px 4px rgba(0,0,0,.3); letter-spacing: -.3px; }
.menus > * { white-space: nowrap; flex: none; }
.menus span { position: relative; left: -1px; }
.menus b { font-weight: 700; letter-spacing: 0; }
.status-items { margin-left: auto; display: flex; align-items: center; gap: 36px; }
.clock { width: 262px; margin-left: -3px; white-space: nowrap; letter-spacing: .05px; text-shadow: 0 2px 4px rgba(0,0,0,.3); }

/* main window */
.desktop { flex: 1; position: relative; isolation: isolate; padding-top: 2px; background: linear-gradient(90deg, #d42a5c 0 535px, #14507c 536px); }
.desktop::after { content: ""; position: absolute; left: 0; right: 0; bottom: 0; height: 30px; background: linear-gradient(90deg, #14254a 50%, #8f1d4a 50%); z-index: -1; }
.window {
  height: 1400px; border-radius: 20px 20px 18px 18px; overflow: hidden;
  display: flex; flex-direction: column; background: #ebebeb;
}
.titlebar { height: 57px; flex: none; position: relative; display: flex; align-items: center; justify-content: center; background: #eee7e9; border-bottom: 1px solid #d3cfd0; color: #aaa4a6; }
.titlebar h1 { padding: 0 2px 3px 0; letter-spacing: -.2px; }
.lights { position: absolute; left: 16px; display: flex; gap: 16px; }
.lights i { width: 24px; height: 24px; border-radius: 50%; background: #ff5f57; border: 1px solid #e2463f; }
.lights i:nth-child(2) { background: #febc2e; border-color: #e0a028; }
.lights i:nth-child(3) { background: #28c840; border-color: #24a834; }
.lights.idle i { background: #d4ced0; border-color: #bdb8ba; }

.toolbar { display: flex; align-items: center; flex: none; border-bottom: 2px solid #b2b2b2; background: linear-gradient(#f6f6f6, #ebebeb); padding-left: 9px; overflow: hidden; }
.r1 { height: 76px; }
.r2 { height: 78px; padding-top: 2px; }
.r3 { height: 76px; padding-top: 4px; }
.btn { width: 64px; height: 62px; margin-right: 2px; flex: none; display: flex; align-items: center; justify-content: center; position: relative; }
.btn svg { width: 48px; height: 48px; }
.btn.on { background: #dadada; border: 2px solid #a8a8a8; border-radius: 6px; }
.off svg { opacity: .33; filter: saturate(.4); }
.grip { width: 10px; height: 34px; margin-right: 7px; flex: none; background: radial-gradient(circle, #b4b4b4 1.2px, transparent 1.6px) 0 0 / 6px 6px; }
.g2 { margin: 0 6px 0 15px; }
.g3 { margin: 0 7px 0 14px; }
.g4 { margin: 0 10px 0 15px; }
.vsep { width: 14px; height: 38px; background: linear-gradient(90deg, transparent 4px, #cfcfcf 4px 6px, #fff 6px 8px, transparent 8px); }
.r2 .vsep { width: 13px; }
.arrow { width: 24px; height: 10px; background: #555; clip-path: polygon(4px 0, 20px 0, 12px 9px); }
.r3 .arrow { margin-left: -2px; margin-right: 2px; }
.r3 .g4 + .btn { margin-left: -3px; }
.r2 .a2 { margin: 0 1px 0 -1px; }
.menu::after { content: ""; position: absolute; right: 5px; bottom: 6px; border: 6px solid transparent; border-top-color: #444; border-bottom: 0; }
.ic-a { font: 25px "Noto Sans", sans-serif; fill: #333; }
.ic-11 { font: bold 19px "Liberation Sans", sans-serif; fill: #555; }
.ic-i { font: italic bold 34px "Liberation Serif", serif; fill: #fff; }
.ic-e { font: 50px "Liberation Serif", serif; fill: #5b2d6b; }
.ic-e.big { font-size: 62px; }

.workspace { flex: 1; min-height: 0; display: flex; }
.dock { width: 699px; flex: none; display: flex; flex-direction: column; }
.dock-title { height: 42px; flex: none; padding: 2px 3px 0 8px; display: flex; align-items: center; justify-content: space-between; font-size: 22px; }
.dock-title.second { height: 44px; padding: 0 3px 1px 8px; }
.dock-title span { display: flex; gap: 6px; }
.dock-title svg { width: 22px; height: 22px; }
.dock-tools { height: 61px; flex: none; display: flex; align-items: center; gap: 18px; padding: 0 0 4px 15px; }
.dock-tools.second { height: 58px; padding-bottom: 4px; }
.dock-tools svg { width: 32px; height: 32px; }
.a3 { margin: 0 -8px 0 -10px; }
.pane { display: flex; border: 1px solid #b4b4b4; border-left-color: #c8c8c8; background: #fff; min-height: 0; }
.browser { height: 394px; flex: none; }
.layers { flex: 1; }
.tree { flex: 1; overflow: hidden; letter-spacing: -.28px; }
.tree li { height: 36px; display: flex; align-items: center; white-space: nowrap; padding-left: 8.500px; }
.tree li > svg { width: 32px; height: 32px; margin: 0 13px 0 14px; }
.tree .l1 { padding-left: 48.500px; }
.tree .l2 { padding-left: 88.500px; }
.tree .l3 { padding-left: 128.500px; }
.tw { width: 24px; height: 20px; background: #5a5a5a; clip-path: polygon(9px 0, 17px 10px, 9px 20px); }
.tw.open { clip-path: polygon(4px 5px, 20px 5px, 12px 15px); }
.tw.none { background: none; }
.scroll { width: 28px; flex: none; display: flex; flex-direction: column; background: #e4e4e4; border-left: 1px solid #b4b4b4; }
.scroll i { display: block; background: linear-gradient(90deg, #eee, #fff); border-bottom: 2px solid #b4b4b4; }
.scroll .up, .scroll .down { height: 27px; position: relative; }
.scroll .down { border-top: 2px solid #b4b4b4; border-bottom: 0; }
.scroll .up::after, .scroll .down::after { content: ""; display: block; margin: 8px auto 0 5px; border: 8px solid transparent; border-top-width: 0; border-bottom: 9px solid #5a5a5a; width: 0; }
.scroll .up { padding-top: 1px; }
.scroll .down::after { border-bottom: 0; border-top: 9px solid #5a5a5a; }
.scroll .thumb { height: 59px; }
.scroll .long { height: 367px; }
.scroll .track { flex: 1; background: #e2e2e2; border: 0; }

.tree.bold { letter-spacing: 0; }
.bold li { font-weight: 700; }
.tree.bold li > svg.sym { margin: 0 12px 0 0; }
.tree.bold li > svg.mem { margin: 0 9px 0 auto; width: 33px; height: 33px; color: #6a6a6a; }
.tree.bold li > svg.dim { color: #8b95a5; }
.cb { width: 28px; height: 28px; border: 2px solid #b8b8b8; background: #fff; margin: 0 12px 0 14px; position: relative; }
.ck::after { content: ""; position: absolute; left: 7px; top: 0; width: 8px; height: 17px; border: solid #111; border-width: 0 3px 3px 0; transform: rotate(28deg) skewY(10deg); }
.sw { width: 32px; height: 32px; border: 1px solid; margin-right: 12px; }
.sw.line { height: 2px; border: 0; background: #cfd0b4; }
.sel { background: #dcdcdc; }
.sel u { text-decoration-thickness: 3px; text-underline-offset: 4px; color: #000; }
.tree.bold .cls { height: 72px; padding-left: 73px; font-weight: 400; font-size: 25.500px; letter-spacing: -.1px; }
.ln { width: 68px; height: 4px; background: #999; margin-right: 12px; }
.hid { color: #808080; font-style: italic; }
.dot { width: 8px; height: 8px; border-radius: 50%; border: 1px solid #666; margin: 0 24px 0 12px; }
.hsplit { height: 12px; flex: none; display: flex; align-items: center; justify-content: center; }
.hsplit i { width: 36px; height: 4px; margin-left: 4px; background: radial-gradient(circle, #b4b4b4 1.2px, transparent 1.600px) 0 0 / 6px 4px; }
.vsplit { width: 14px; flex: none; display: flex; align-items: center; justify-content: flex-end; border-right: 1px solid #b0b0b0; margin-top: 3px; }
.vsplit i { width: 4px; height: 34px; background: radial-gradient(circle, #b4b4b4 1.2px, transparent 1.6px) 0 0 / 4px 6px; margin-right: 4px; }

.map { flex: 1; min-width: 0; margin: 3px 1px 0 0; border-top: 1px solid #b0b0b0; border-right: 1px solid #b0b0b0; overflow: hidden; }
.map svg { width: 1845px; height: 1051px; overflow: hidden; }
.wood { fill: #f5f6f4; stroke: #f5f6f4; stroke-width: 14; stroke-linejoin: round; }
.road { fill: none; stroke: #eeeeed; stroke-width: 5; stroke-linejoin: round; }
.road.big { stroke: #e2e2e2; stroke-width: 10; }
.road.core { stroke: #f6f6f5; stroke-width: 4; }
.water { fill: none; stroke: #dbe2e5; stroke-width: 5; stroke-linejoin: round; }
.bound { fill: none; stroke: #f0d8dc; stroke-width: 5; stroke-dasharray: 7 7; }
.city { fill: #deb032; stroke: #222; stroke-width: 4; stroke-linejoin: round; }
.labels { font: 700 16.500px "Open Sans", "Noto Sans", sans-serif; fill: #9eabb8; stroke: #fafaf8; stroke-width: 2px; paint-order: stroke; }

.statusbar { height: 58px; flex: none; display: flex; align-items: center; border-top: 1px solid #c4c4c4; background: linear-gradient(#ebebeb, #d4d4d4); padding: 7px 13px 1px 8px; white-space: nowrap; }
.locator { width: 428px; height: 48px; flex: none; border: 2px solid #a4a4a4; border-radius: 6px; background: #fff; display: flex; align-items: center; color: #808080; letter-spacing: -.2px; }
.locator svg { width: 28px; height: 28px; margin: 0 13px 0 15px; fill: none; stroke: #808080; stroke-width: 2.2px; }
.msg { width: 386px; margin-left: 17px; font-size: 22.200px; flex: none; padding-top: 2px; }
.coord { width: 121px; font-size: 22.200px; flex: none; padding-top: 2px; }
.coordbox { width: 300px; height: 44px; border: 2px solid #a4a4a4; border-radius: 6px; background: #f6f6f6; padding: 2px 0 0 16px; font-size: 22.200px; display: flex; align-items: center; }
.bubble { width: 34px; height: 32px; margin-left: auto; }

/* attribute table window */
.dialog {
  position: absolute; left: 1058px; top: 66px; width: 1438px; height: 1336px;
  border-radius: 20px; display: flex; flex-direction: column; background: #ebebeb;
  box-shadow: 0 0 0 1px rgba(0,0,0,.28), 0 34px 70px rgba(0,0,0,.5);
  overflow: hidden;
}
.dlg-title { height: 58px; flex: none; display: flex; align-items: center; justify-content: center; position: relative; background: #f5f1f3; border-bottom: 1px solid #c9c5c7; color: #454344; padding: 0 0 2px 3px; }
.dlg-title h2 { letter-spacing: .12px; }
.dlg-tools { height: 61px; flex: none; display: flex; align-items: center; padding-left: 7px; padding-bottom: 3px; border-bottom: 1px solid #b4b4b4; }
.dlg-tools span { width: 49.800px; flex: none; display: flex; justify-content: center; position: relative; }
.dlg-tools svg { width: 32px; height: 32px; }
.dlg-tools .vsep { width: 15px; height: 22px; }
.dlg-tools .menu::after { right: 4px; bottom: -1px; }
.table { flex: 1; display: flex; flex-direction: column; margin: 0 2px; border-right: 1px solid #b4b4b4; background: linear-gradient(90deg, #ebebeb 20px, #fff 20px); }
.thead, .trow { display: grid; grid-template-columns: 19px repeat(7, 200px); flex: none; }
.thead { height: 35px; background: linear-gradient(#f6f6f6, #ebebeb); }
.thead span { display: flex; align-items: center; justify-content: center; font-size: 21.500px; color: #222; padding: 2px 0 0 1px; border-right: 1px solid #bdbdbd; border-bottom: 2px solid #a8a8a8; }
.thead span:first-child { border-right-color: transparent; }
.trow { height: 59px; }
.trow span { display: flex; align-items: center; padding: 0 0 3px 8px; border-right: 1px solid #c4c4c4; border-bottom: 1px solid #c4c4c4; white-space: nowrap; letter-spacing: -.35px; color: #000; }
.trow .rn { font-size: 22px; padding: 2px 0 0 4px; background: #f3f3f3; border-right: 2px solid #aaa; border-bottom: 2px solid #aaa; }
.trow .cur { border: 4px solid #00ff80; border-radius: 2px; background: linear-gradient(#fafbfd, #edf0f6); padding-left: 1px; color: #222; margin: 0 1px 0 2px; letter-spacing: -.1px; }
.dlg-foot { height: 59px; flex: none; border-top: 1px solid #a8a8a8; display: flex; justify-content: space-between; padding: 7px 6px 0; background: #ebebeb; }
.filter { width: 240px; height: 46px; border: 2px solid #a8a8a8; border-radius: 6px; background: linear-gradient(#f8f8f8, #e2e2e2); display: flex; align-items: center; font-size: 20px; color: #222; padding-left: 4px; position: relative; white-space: nowrap; }
.filter svg { width: 32px; height: 32px; margin-right: 5px; }
.filter::after { content: ""; position: absolute; right: 3px; bottom: 4px; border: 6px solid transparent; border-top-color: #444; border-bottom: 0; }
.views { display: flex; gap: 10px; }
.views > svg { width: 28px; height: 28px; margin-top: 8px; }
.pressed { width: 48px; height: 46px; border: 2px solid #a8a8a8; border-radius: 6px; background: #d8d8d8; display: flex; align-items: center; justify-content: center; }
.pressed svg { width: 28px; height: 28px; }
```
